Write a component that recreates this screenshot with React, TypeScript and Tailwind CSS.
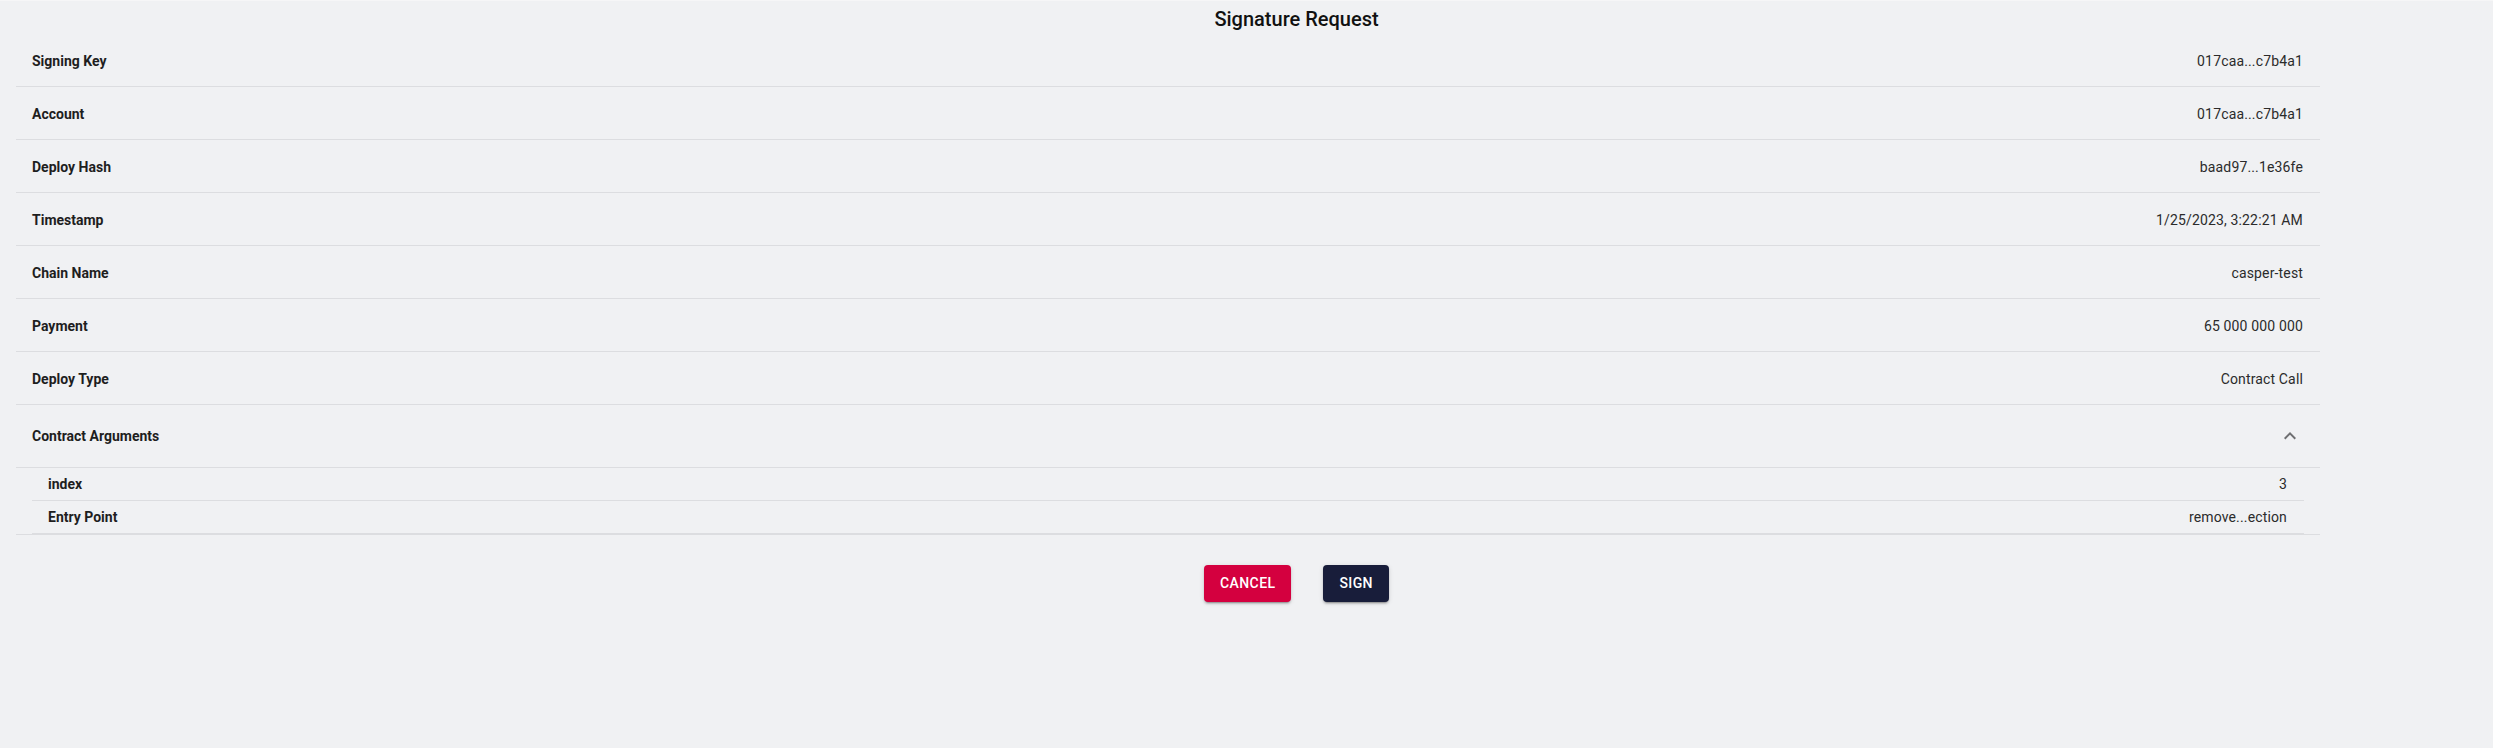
import React from "react";

const rows: [string, string][] = [
  ["Signing Key", "017caa...c7b4a1"],
  ["Account", "017caa...c7b4a1"],
  ["Deploy Hash", "baad97...1e36fe"],
  ["Timestamp", "1/25/2023, 3:22:21 AM"],
  ["Chain Name", "casper-test"],
  ["Payment", "65 000 000 000"],
  ["Deploy Type", "Contract Call"],
];

const args: [string, string][] = [
  ["index", "3"],
  ["Entry Point", "remove...ection"],
];

function Label({ children }: { children: React.ReactNode }) {
  return (
    <span className="text-[14px] font-bold text-[#1e1e1e] leading-[20px]">
      {children}
    </span>
  );
}

function Value({ children }: { children: React.ReactNode }) {
  return (
    <span className="text-[14px] text-[#2b2b2b] tracking-[0.15px] leading-[20px]">{children}</span>
  );
}

export default function App() {
  return (
    <div className="min-h-[748px] w-full bg-[#f0f1f3] border-t border-[#f6f6f7] [font-family:Roboto,sans-serif]">
      <div className="flex h-[33px] justify-center pl-[100px] pt-[3px]">
        <h1 className="text-[20px] font-medium leading-[30px] text-[#111111]">Signature Request</h1>
      </div>
      <div className="ml-4 w-[2304px]">
        {rows.map(([k, v]) => (
          <div
            key={k}
            className="flex h-[53px] items-center justify-between border-b border-[#dcdde0] pl-4 pr-[17px] pt-[2px]"
          >
            <Label>{k}</Label>
            <Value>{v}</Value>
          </div>
        ))}
        <div className="border-b border-[#dcdde0]">
          <div className="flex h-[63px] items-center justify-between border-b border-[#dcdde0] pl-4 pr-[18px]">
            <Label>Contract Arguments</Label>
            <svg viewBox="0 0 24 24" className="h-6 w-6 fill-[#6e6f71]">
              <path d="M12 8l-6 6 1.41 1.41L12 10.83l4.59 4.58L18 14z" />
            </svg>
          </div>
          <div className="ml-4 mr-4">
            {args.map(([k, v]) => (
              <div
                key={k}
                className="flex h-[33px] items-center justify-between border-b border-[#dcdde0] pl-4 pr-[17px]"
              >
                <Label>{k}</Label>
                <Value>{v}</Value>
              </div>
            ))}
          </div>
        </div>
      </div>
      <div className="mt-[30px] flex justify-center gap-8 pl-[100px]">
        <button className="h-[37px] rounded bg-[#d4003f] px-4 text-[14px] font-medium uppercase tracking-[0.4px] text-white shadow-[0_3px_1px_-2px_rgba(0,0,0,0.2),0_2px_2px_0_rgba(0,0,0,0.14),0_1px_5px_0_rgba(0,0,0,0.12)]">
          Cancel
        </button>
        <button className="h-[37px] rounded bg-[#181d3a] px-4 text-[14px] font-medium uppercase tracking-[0.4px] text-white shadow-[0_3px_1px_-2px_rgba(0,0,0,0.2),0_2px_2px_0_rgba(0,0,0,0.14),0_1px_5px_0_rgba(0,0,0,0.12)]">
          Sign
        </button>
      </div>
    </div>
  );
}
